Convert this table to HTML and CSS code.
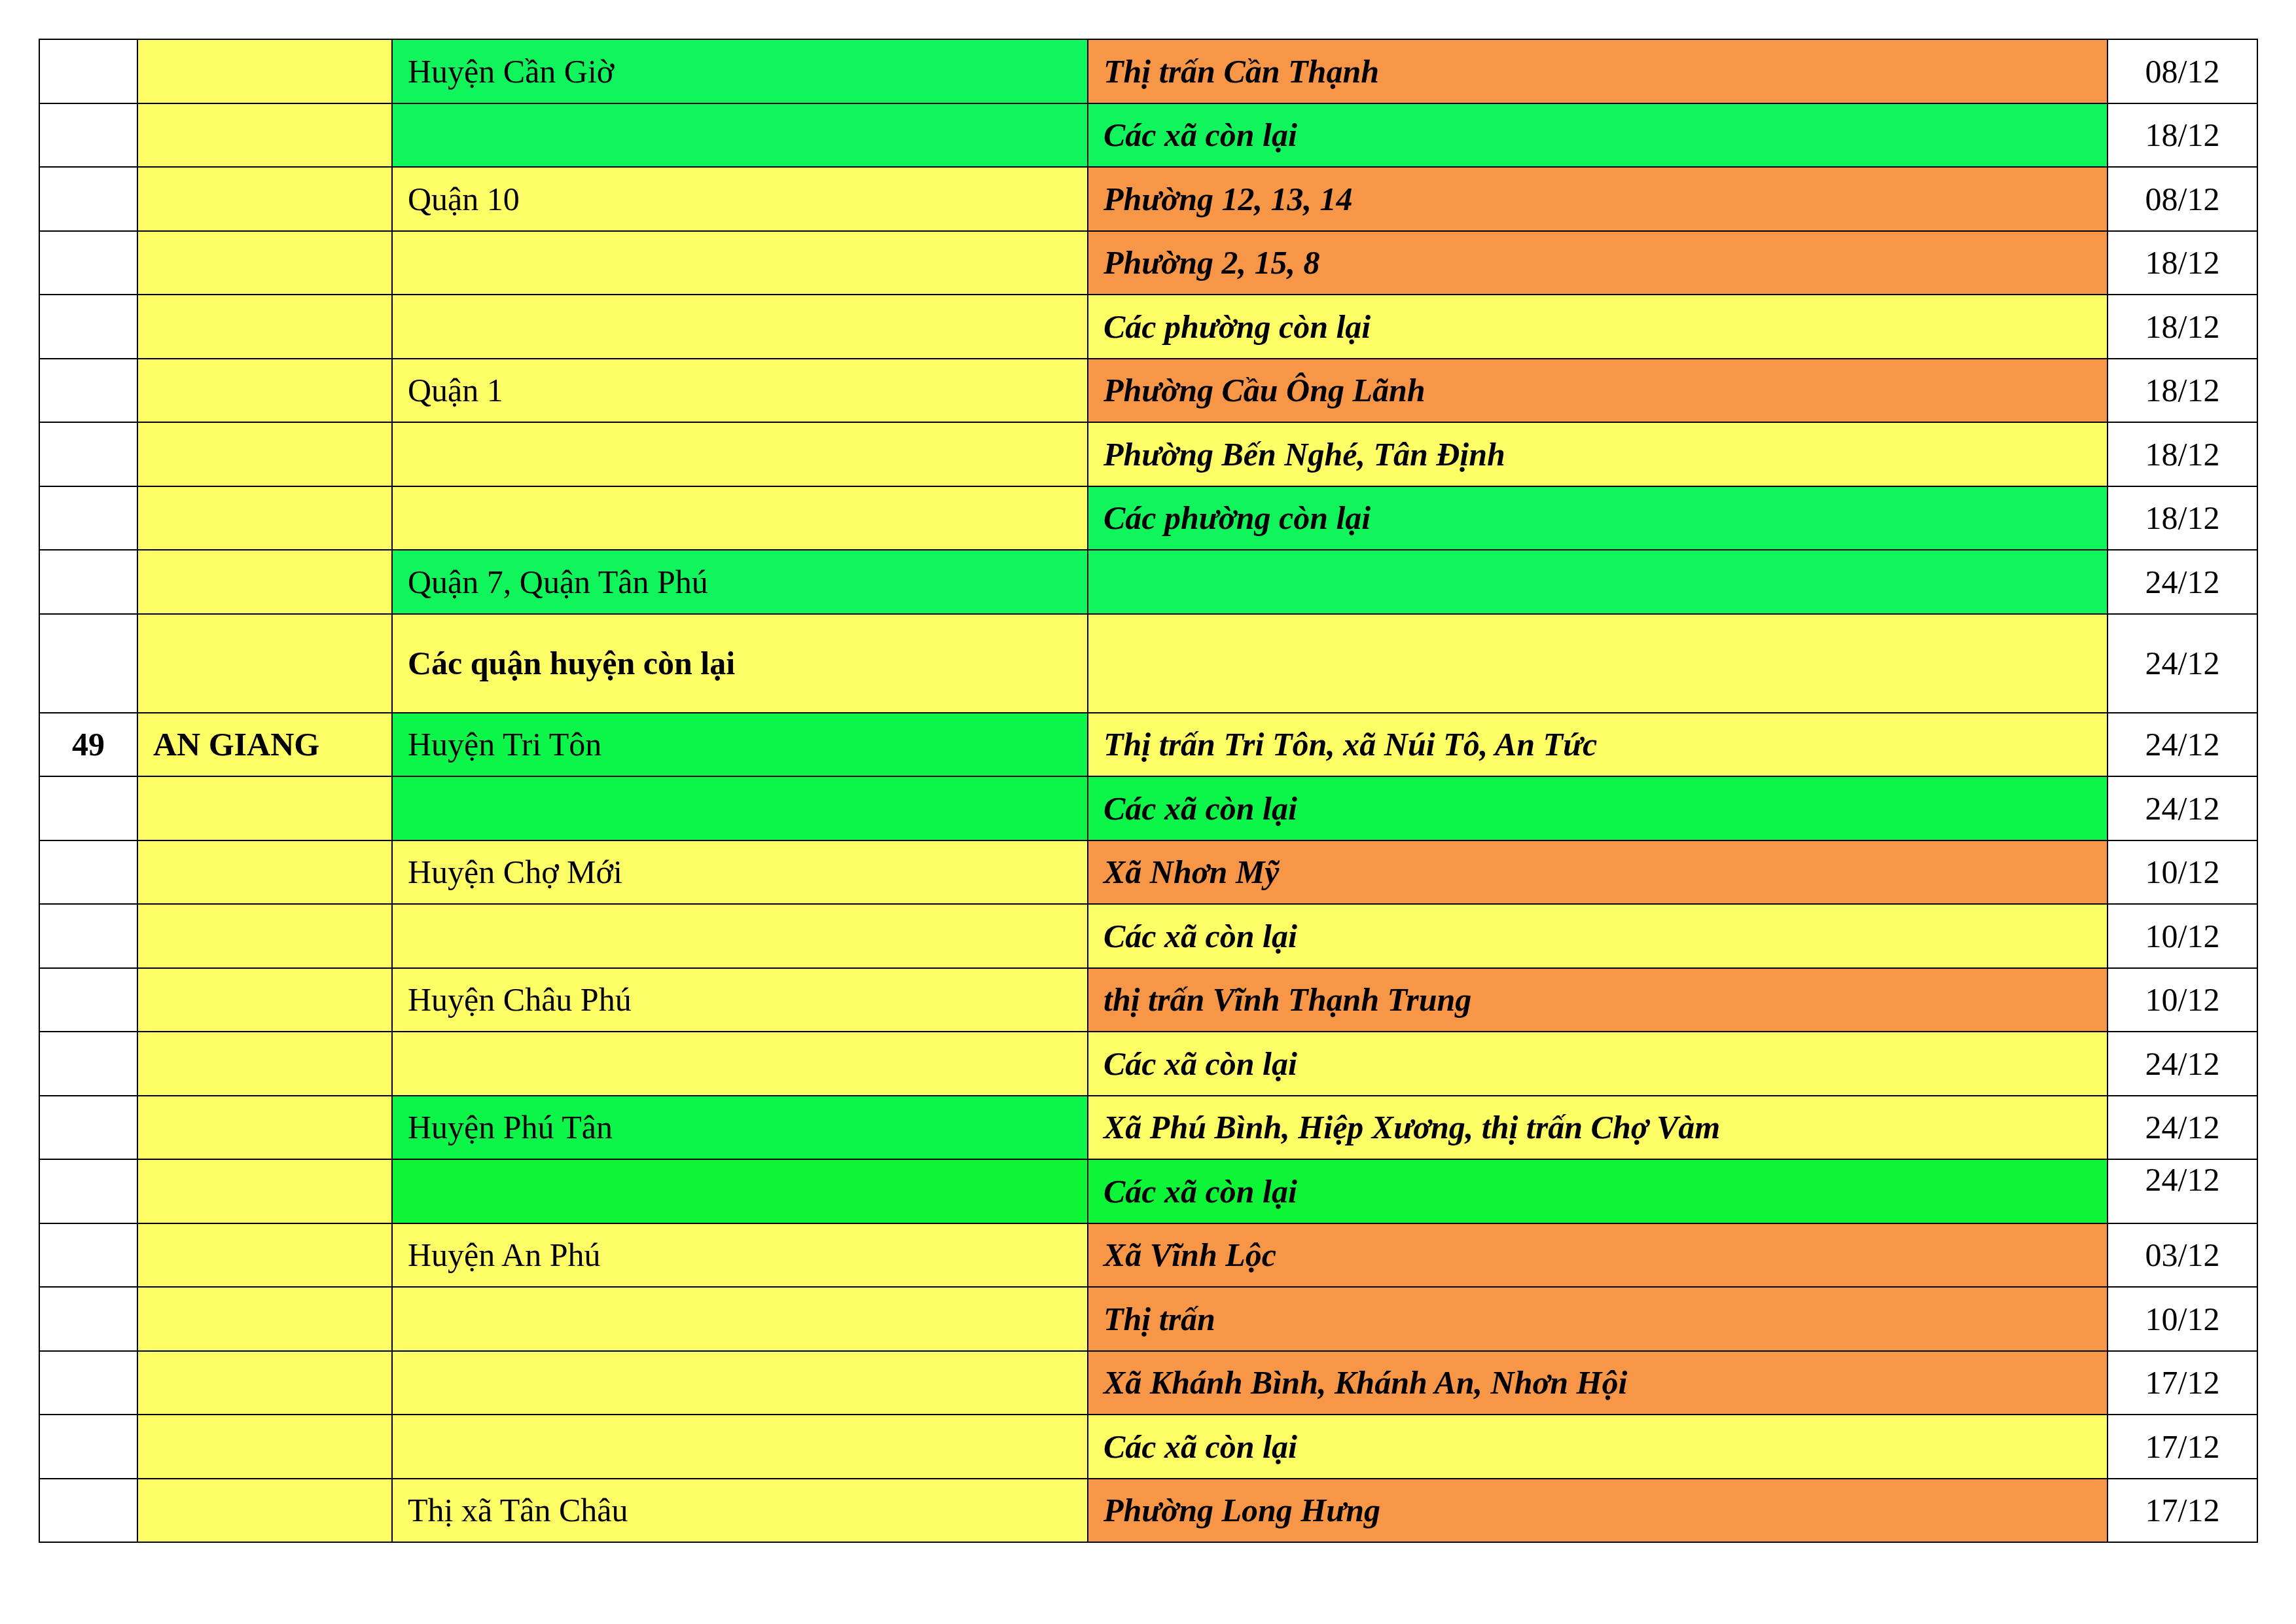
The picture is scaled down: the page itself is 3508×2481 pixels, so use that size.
FILE: index.html
```html
<!DOCTYPE html>
<html lang="vi">
<head>
<meta charset="utf-8">
<title>Bảng</title>
<link rel="stylesheet" href="styles.css">
</head>
<body>
<div class="page">
<table class="grid">
<colgroup>
<col class="c-stt"><col class="c-prov"><col class="c-dist"><col class="c-ward"><col class="c-date">
</colgroup>
<tbody>
<tr><td class="w"></td><td class="y"></td><td class="g">Huyện Cần Giờ</td><td class="o bi">Thị trấn Cần Thạnh</td><td class="d">08/12</td></tr>
<tr><td class="w"></td><td class="y"></td><td class="g"></td><td class="g bi">Các xã còn lại</td><td class="d">18/12</td></tr>
<tr><td class="w"></td><td class="y"></td><td class="y">Quận 10</td><td class="o bi">Phường 12, 13, 14</td><td class="d">08/12</td></tr>
<tr><td class="w"></td><td class="y"></td><td class="y"></td><td class="o bi">Phường 2, 15, 8</td><td class="d">18/12</td></tr>
<tr><td class="w"></td><td class="y"></td><td class="y"></td><td class="y bi">Các phường còn lại</td><td class="d">18/12</td></tr>
<tr><td class="w"></td><td class="y"></td><td class="y">Quận 1</td><td class="o bi">Phường Cầu Ông Lãnh</td><td class="d">18/12</td></tr>
<tr><td class="w"></td><td class="y"></td><td class="y"></td><td class="y bi">Phường Bến Nghé, Tân Định</td><td class="d">18/12</td></tr>
<tr><td class="w"></td><td class="y"></td><td class="y"></td><td class="g bi">Các phường còn lại</td><td class="d">18/12</td></tr>
<tr><td class="w"></td><td class="y"></td><td class="g">Quận 7, Quận Tân Phú</td><td class="g"></td><td class="d">24/12</td></tr>
<tr class="tall"><td class="w"></td><td class="y"></td><td class="y b">Các quận huyện còn lại</td><td class="y"></td><td class="d">24/12</td></tr>
<tr><td class="w b ctr">49</td><td class="y b">AN GIANG</td><td class="g2">Huyện Tri Tôn</td><td class="y bi">Thị trấn Tri Tôn, xã Núi Tô, An Tức</td><td class="d">24/12</td></tr>
<tr><td class="w"></td><td class="y"></td><td class="g2"></td><td class="g2 bi">Các xã còn lại</td><td class="d">24/12</td></tr>
<tr><td class="w"></td><td class="y"></td><td class="y">Huyện Chợ Mới</td><td class="o bi">Xã Nhơn Mỹ</td><td class="d">10/12</td></tr>
<tr><td class="w"></td><td class="y"></td><td class="y"></td><td class="y bi">Các xã còn lại</td><td class="d">10/12</td></tr>
<tr><td class="w"></td><td class="y"></td><td class="y">Huyện Châu Phú</td><td class="o bi">thị trấn Vĩnh Thạnh Trung</td><td class="d">10/12</td></tr>
<tr><td class="w"></td><td class="y"></td><td class="y"></td><td class="y bi">Các xã còn lại</td><td class="d">24/12</td></tr>
<tr><td class="w"></td><td class="y"></td><td class="g2">Huyện Phú Tân</td><td class="y bi">Xã Phú Bình, Hiệp Xương, thị trấn Chợ Vàm</td><td class="d">24/12</td></tr>
<tr><td class="w"></td><td class="y"></td><td class="g3"></td><td class="g3 bi">Các xã còn lại</td><td class="d top">24/12</td></tr>
<tr><td class="w"></td><td class="y"></td><td class="y">Huyện An Phú</td><td class="o bi">Xã Vĩnh Lộc</td><td class="d">03/12</td></tr>
<tr><td class="w"></td><td class="y"></td><td class="y"></td><td class="o bi">Thị trấn</td><td class="d">10/12</td></tr>
<tr><td class="w"></td><td class="y"></td><td class="y"></td><td class="o bi">Xã Khánh Bình, Khánh An, Nhơn Hội</td><td class="d">17/12</td></tr>
<tr><td class="w"></td><td class="y"></td><td class="y"></td><td class="y bi">Các xã còn lại</td><td class="d">17/12</td></tr>
<tr><td class="w"></td><td class="y"></td><td class="y">Thị xã Tân Châu</td><td class="o bi">Phường Long Hưng</td><td class="d">17/12</td></tr>
</tbody>
</table>
</div>
</body>
</html>
```

FILE: styles.css
```css
html, body {
  margin: 0;
  padding: 0;
  background: #ffffff;
}

.page {
  padding: 59px 0 0 59px;
}

.grid {
  border-collapse: collapse;
  table-layout: fixed;
  width: 3389px;
  font-family: "Liberation Serif", "Times New Roman", serif;
  font-size: 50px;
  color: #000;
  border: 2px solid #000;
}

.c-stt { width: 150px; }
.c-prov { width: 389px; }
.c-dist { width: 1063px; }
.c-ward { width: 1558px; }
.c-date { width: 229px; }

.grid tr {
  height: 97.5px;
}

.grid tr.tall {
  height: 151px;
}

.grid td {
  border: 2px solid #000;
  padding: 0 10px 0 23px;
  vertical-align: middle;
  white-space: nowrap;
  overflow: hidden;
}

.w { background: #ffffff; }
.y { background: #fffd66; }
.g { background: #10f55c; }
.g2 { background: #0cf549; }
.g3 { background: #0cf536; }
.o { background: #f79646; }

.b { font-weight: bold; }
.bi { font-weight: bold; font-style: italic; }

.grid td.ctr {
  text-align: center;
  padding-left: 0;
  padding-right: 0;
}

.grid td.d {
  text-align: center;
  padding: 0;
  background: #ffffff;
}

.grid td.d.top {
  vertical-align: top;
  padding-top: 1px;
}
```
